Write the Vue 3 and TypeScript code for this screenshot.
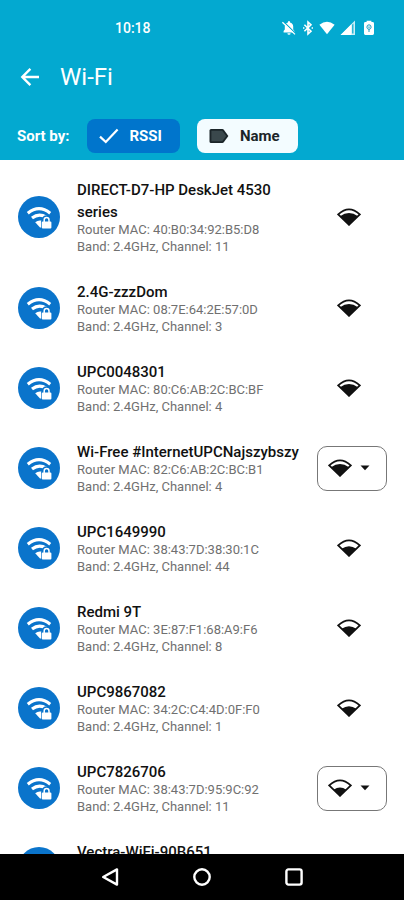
<script setup lang="ts">
import { ref } from 'vue'

type SortKey = 'rssi' | 'name'
type Level = 1 | 2 | 3

interface Network {
  name: string
  mac?: string
  channel?: number
  level?: Level
  group?: boolean
}

const sortBy = ref<SortKey>('rssi')

const networks: Network[] = [
  { name: 'DIRECT-D7-HP DeskJet 4530 series', mac: '40:B0:34:92:B5:D8', channel: 11, level: 3 },
  { name: '2.4G-zzzDom', mac: '08:7E:64:2E:57:0D', channel: 3, level: 3 },
  { name: 'UPC0048301', mac: '80:C6:AB:2C:BC:BF', channel: 4, level: 3 },
  { name: 'Wi-Free #InternetUPCNajszybszy', mac: '82:C6:AB:2C:BC:B1', channel: 4, level: 3, group: true },
  { name: 'UPC1649990', mac: '38:43:7D:38:30:1C', channel: 44, level: 2 },
  { name: 'Redmi 9T', mac: '3E:87:F1:68:A9:F6', channel: 8, level: 2 },
  { name: 'UPC9867082', mac: '34:2C:C4:4D:0F:F0', channel: 1, level: 2 },
  { name: 'UPC7826706', mac: '38:43:7D:95:9C:92', channel: 11, level: 1, group: true },
  { name: 'Vectra-WiFi-90B651' },
]

// Filled wedge inside the 24x18 signal fan, by level
const wedge: Record<Level, string> = {
  3: 'M3 8.2Q12 1.8 21 8.2L12 17.6Z',
  2: 'M4.6 9.8Q12 4.6 19.4 9.8L12 17.6Z',
  1: 'M5.6 10.8Q12 6 18.4 10.8L12 17.6Z',
}
</script>

<template>
  <div class="screen">
    <header class="header">
      <div class="status">
        <span class="time">10:18</span>
        <div class="status-icons">
          <svg width="16" height="16" viewBox="0 0 16 16">
            <path d="M2.6 12.4V11L3.8 9.6V6.6C3.8 4.4 5 3 7 2.5V2a1 1 0 0 1 2 0v.5c2 .5 3.2 1.9 3.2 4.1v3l1.2 1.4v1.4ZM6.4 13.2h3.2a1.6 1.6 0 0 1-3.2 0Z" fill="#fff" />
            <path d="M2.6 1.8 14.8 13.6" stroke="#03a9d0" stroke-width="1.2" />
            <path d="M1.4 2.2 14 14.4" stroke="#fff" stroke-width="1.3" />
          </svg>
          <svg width="12" height="16" viewBox="0 0 12 16">
            <path d="M2.4 4.8 9 11.2 6 14V2l3 2.8-6.6 6.4M1 8h1.4M9.6 8H11" fill="none" stroke="#fff" stroke-width="1.6" />
          </svg>
          <svg width="16" height="16" viewBox="0 0 16 16">
            <path d="M.4 4.8Q8-1.4 15.6 4.8L8 14.2Z" fill="#fff" />
          </svg>
          <svg width="16" height="16" viewBox="0 0 16 16">
            <path d="M.6 15 15 .6V15Z" fill="#fff" opacity=".8" />
            <path d="M.6 15 11.4 4.2V15Z" fill="#fff" />
            <path d="M12.2 4.8v8.8h1.2V3.6Z" fill="#03a9d0" />
          </svg>
          <svg class="battery" width="12" height="16" viewBox="0 0 12 16">
            <path d="M3.6 2V.8h4.8V2h1.2q1.4 0 1.4 1.4v10.2q0 1.4-1.4 1.4H2.4Q1 15 1 13.6V3.4Q1 2 2.4 2Z" fill="#fff" />
            <path d="M6 12v-2M3.9 7.2Q3.9 4.8 6 4.8T8.1 7.2Q8.1 8.800 6 9.6Q3.9 8.8 3.9 7.2ZM6 6.400v2" fill="none" stroke="#159cc2" stroke-width="1" />
          </svg>
        </div>
      </div>

      <div class="toolbar">
        <button class="back" type="button" aria-label="Back">
          <svg width="20" height="20" viewBox="0 0 20 20">
            <path d="M19 10H2.6M10.4 1.9 2.3 10l8.100 8.100" fill="none" stroke="#fff" stroke-width="2.4" />
          </svg>
        </button>
        <h1 class="title">Wi-Fi</h1>
      </div>

      <div class="sort">
        <span class="sort-label">Sort by:</span>
        <button class="chip" :class="{ active: sortBy === 'rssi' }" type="button" :aria-pressed="sortBy === 'rssi'" @click="sortBy = 'rssi'">
          <svg width="20" height="16" viewBox="0 0 20 16">
            <path d="M1 8.6 6.800 14 18.6 1.6" fill="none" stroke="currentColor" stroke-width="2.2" />
          </svg>
          RSSI
        </button>
        <button class="chip" :class="{ active: sortBy === 'name' }" type="button" :aria-pressed="sortBy === 'name'" @click="sortBy = 'name'">
          <svg width="20" height="16" viewBox="0 0 20 16">
            <path d="M2 1h11.4q.8 0 1.4.8L19.4 8l-4.600 6.200q-.6.800-1.400.8H2q-1.500 0-1.500-1.500v-11Q.5 1 2 1Z" fill="#1b2529" />
            <path d="M2.4 2.8h10.8L17.2 8l-4 5.2H2.4Z" fill="#3a484c" />
          </svg>
          Name
        </button>
      </div>
    </header>

    <ul class="list">
      <li v-for="n in networks" :key="n.name" class="row">
        <span class="avatar">
          <svg width="42" height="42" viewBox="0 0 42 42">
            <g fill="none" stroke="#fff">
              <path d="M9.8 17.2Q21 8.2 32.2 17.2" stroke-width="3.2" />
              <path d="M14 22.100Q21 16.600 28.200 21.200" stroke-width="3.2" />
            </g>
            <path d="M17.2 26.300Q20 23.800 23.400 24.600V31.400H22Z" fill="#fff" />
            <path d="M23.4 24.600h10v8.400h-10Z" fill="#0a74cb" />
            <path d="M25.6 26V23.800a2.900 2.900 0 0 1 5.800 0V26" fill="none" stroke="#0a74cb" stroke-width="3.4" />
            <path d="M24.8 25.400h7.600q1 0 1 1v5q0 1-1 1h-7.600q-1 0-1-1v-5q0-1 1-1Z" fill="#fff" />
            <path d="M26.2 26V23.900a2.400 2.400 0 0 1 4.800 0V26" fill="none" stroke="#fff" stroke-width="1.5" />
          </svg>
        </span>
        <div class="body">
          <h2 class="name">{{ n.name }}</h2>
          <div v-if="n.mac" class="meta">
            <p>Router MAC: {{ n.mac }}</p>
            <p>Band: 2.4GHz, Channel: {{ n.channel }}</p>
          </div>
        </div>
        <component :is="n.group ? 'button' : 'span'" v-if="n.level" class="signal" :class="{ group: n.group }" :type="n.group ? 'button' : undefined" :aria-label="n.group ? 'Show access points' : undefined">
          <svg width="24" height="18" viewBox="0 0 24 18">
            <path d="M1.2 6.4Q12-3.600 22.8 6.400L12 16.800Z" fill="#fff" stroke="#111" stroke-width="1.7" />
            <path :d="wedge[n.level]" fill="#111" />
          </svg>
          <svg v-if="n.group" width="10" height="6" viewBox="0 0 10 6">
            <path d="M.5.500h9L5 5.300Z" fill="#111" />
          </svg>
        </component>
      </li>
    </ul>

    <nav class="navbar">
      <button type="button" aria-label="Back">
        <svg width="20" height="20" viewBox="0 0 20 20">
          <path d="M17 2.4v15.2L3.2 10Z" fill="none" stroke="#fff" stroke-width="2.4" stroke-linejoin="round" />
        </svg>
      </button>
      <button type="button" aria-label="Home">
        <svg width="20" height="20" viewBox="0 0 20 20">
          <circle cx="10" cy="10" r="7.7" fill="none" stroke="#fff" stroke-width="2.4" />
        </svg>
      </button>
      <button type="button" aria-label="Recent apps">
        <svg width="20" height="20" viewBox="0 0 20 20">
          <rect x="2.4" y="2.4" width="15.2" height="15.2" rx="2" fill="none" stroke="#fff" stroke-width="2.4" />
        </svg>
      </button>
    </nav>
  </div>
</template>

<style>
body {
  margin: 0;
}
</style>

<style scoped>
.screen {
  display: flex;
  flex-direction: column;
  height: 100vh;
  background: #fff;
  color: #111;
  font-family: Roboto, "Liberation Sans", sans-serif;
}

svg {
  display: block;
  flex: none;
}

button {
  margin: 0;
  padding: 0;
  border: 0;
  background: none;
  color: inherit;
  font: inherit;
  cursor: pointer;
}

h1,
h2,
p,
ul {
  margin: 0;
  padding: 0;
}

.header {
  flex: none;
  padding-bottom: 7px;
  background: #03a9d0;
  color: #fff;
}

.status {
  display: flex;
  align-items: center;
  justify-content: space-between;
  height: 56px;
  padding: 0 29px 0 115px;
}

.time {
  font-size: 14px;
  font-weight: 500;
}

.status-icons {
  display: flex;
  align-items: center;
  gap: 5px;
}

.battery {
  margin-left: 2px;
}

.toolbar {
  display: flex;
  align-items: center;
  gap: 20px;
  height: 42px;
  padding: 0 20px;
}

.title {
  font-size: 24px;
  font-weight: 400;
  line-height: 28px;
}

.sort {
  display: flex;
  align-items: center;
  gap: 17px;
  padding: 21px 17px 0;
}

.sort-label {
  font-size: 15px;
  font-weight: 700;
}

.chip {
  display: flex;
  align-items: center;
  gap: 11px;
  height: 34px;
  padding: 0 18px 0 12px;
  border-radius: 8px;
  background: #f3fcff;
  color: #1b2529;
  font-size: 15px;
  font-weight: 700;
}

.chip.active {
  background: #0075cc;
  color: #fff;
}

.list {
  flex: 1;
  min-height: 0;
  padding-top: 6px;
  overflow: hidden;
  list-style: none;
}

.row {
  display: flex;
  align-items: center;
  gap: 17px;
  padding: 13px 17px 13px 18px;
}

.avatar {
  flex: none;
  border-radius: 50%;
  background: #0a74cb;
}

.body {
  flex: 1;
  min-width: 0;
  min-height: 54px;
}

.name {
  font-size: 15px;
  font-weight: 500;
  line-height: 22px;
}

.meta {
  margin-top: -2px;
  color: #707070;
  font-size: 13px;
  line-height: 17px;
}

.signal {
  display: flex;
  flex: none;
  align-items: center;
  justify-content: center;
  gap: 8px;
  box-sizing: border-box;
  width: 70px;
  height: 45px;
  padding-right: 6px;
}

.signal.group {
  border: 1px solid #777;
  border-radius: 10px;
}

.navbar {
  display: flex;
  flex: none;
  align-items: center;
  justify-content: center;
  gap: 72px;
  height: 46px;
  background: #000;
}
</style>
